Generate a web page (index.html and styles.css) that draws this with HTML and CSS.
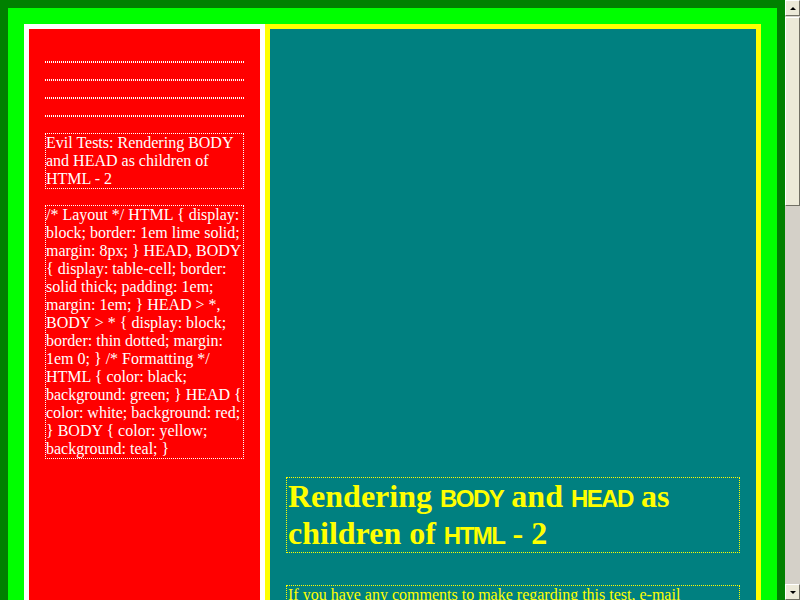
FILE: index.html
```html
<!DOCTYPE html>
<html>
<head>
<meta charset="utf-8">
<title>Evil Tests: Rendering BODY and HEAD as children of HTML - 2</title>
<link rel="stylesheet" href="styles.css">
</head>
<body>
<div class="window">
  <div class="canvas">
    <div class="root">
      <div class="cell head-cell">
        <div class="item empty"></div>
        <div class="item empty"></div>
        <div class="item empty"></div>
        <div class="item empty"></div>
        <div class="item">Evil Tests: Rendering BODY<br>and HEAD as children of<br>HTML - 2</div>
        <div class="item">/* Layout */ HTML { display:<br>block; border: 1em lime solid;<br>margin: 8px; } HEAD, BODY<br>{ display: table-cell; border:<br>solid thick; padding: 1em;<br>margin: 1em; } HEAD &gt; *,<br>BODY &gt; * { display: block;<br>border: thin dotted; margin:<br>1em 0; } /* Formatting */<br>HTML { color: black;<br>background: green; } HEAD {<br>color: white; background: red;<br>} BODY { color: yellow;<br>background: teal; }</div>
      </div>
      <div class="cell body-cell">
        <h1 class="item heading">Rendering <span class="tag">BODY</span> and <span class="tag">HEAD</span> as children of <span class="tag">HTML</span> - 2</h1>
        <p class="item para">If you have any comments to make regarding this test, e-mail ian@hixie.ch.</p>
      </div>
    </div>
  </div>
  <div class="scrollbar">
    <div class="sb-btn"><span class="arrow up"></span></div>
    <div class="sb-thumb"></div>
    <div class="sb-track"></div>
    <div class="sb-btn"><span class="arrow down"></span></div>
  </div>
</div>
</body>
</html>
```

FILE: styles.css
```css
html, body {
  margin: 0;
  padding: 0;
  height: 600px;
  overflow: hidden;
}

.window {
  display: flex;
  width: 800px;
  height: 600px;
  overflow: hidden;
}

.canvas {
  flex: 1;
  background: #008000;
  padding: 8px;
  overflow: hidden;
  font-family: "Liberation Serif", "Times New Roman", serif;
  font-size: 16px;
  line-height: 18px;
}

.root {
  display: flex;
  border: 16px solid #00ff00;
  min-height: 900px;
}

.cell {
  border: 5px solid currentColor;
  padding: 16px;
}

.head-cell {
  width: 199px;
  flex: none;
  color: #ffffff;
  background: #ff0000;
}

.body-cell {
  flex: 1;
  color: #ffff00;
  background: #008080;
  padding-top: 416px;
}

.item {
  display: block;
  border: 1px dotted currentColor;
  margin: 16px 0;
}

.head-cell .item {
  white-space: nowrap;
}

.empty {
  height: 0;
  border-left: none;
  border-right: none;
}

.heading {
  font-size: 32px;
  line-height: 37px;
  font-weight: bold;
  margin: 32px 0;
  padding: 0 0 0 1px;
}

.tag {
  font-family: "Liberation Sans", Arial, sans-serif;
  font-size: 24px;
  line-height: 1;
  letter-spacing: -1.5px;
}

.para {
  margin: 32px 0 16px;
  padding-left: 1px;
}

.scrollbar {
  width: 15px;
  flex: none;
  display: flex;
  flex-direction: column;
  background: #d4d0c8;
}

.sb-btn {
  height: 14px;
  background: #ece9d8;
  border-top: 1px solid #ffffff;
  border-left: 1px solid #ffffff;
  border-right: 1px solid #716f64;
  border-bottom: 1px solid #716f64;
  display: flex;
  align-items: center;
  justify-content: center;
  box-sizing: content-box;
  width: 13px;
}

.sb-thumb {
  height: 187px;
  margin-top: 1px;
  background: #ece9d8;
  border-top: 1px solid #ffffff;
  border-left: 1px solid #ffffff;
  border-right: 1px solid #716f64;
  border-bottom: 1px solid #716f64;
}

.sb-track {
  flex: 1;
}

.arrow {
  width: 0;
  height: 0;
  border-left: 3px solid transparent;
  border-right: 3px solid transparent;
}

.arrow.up {
  border-bottom: 3px solid #000000;
}

.arrow.down {
  border-top: 3px solid #000000;
}
```
